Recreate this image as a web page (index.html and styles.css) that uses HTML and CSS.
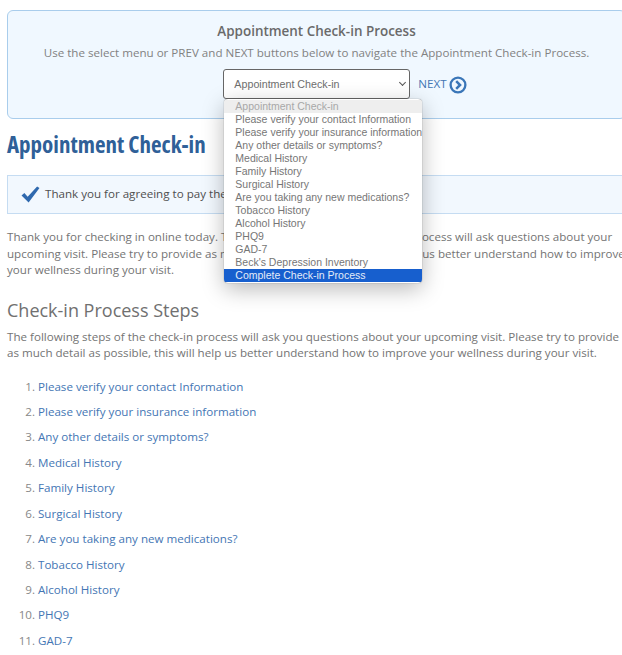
FILE: index.html
```html
<!DOCTYPE html>
<html lang="en">
<head>
    <meta charset="UTF-8">
    <meta name="viewport" content="width=device-width, initial-scale=1.0">
    <title>Appointment Check-in</title>
    <link rel="stylesheet" href="styles.css">
</head>
<body>
    <div class="page">
        <div class="nav-box">
            <h3>Appointment Check-in Process</h3>
            <p>Use the select menu or PREV and NEXT buttons below to navigate the Appointment Check-in Process.</p>
            <div class="nav-row">
                <div class="nav-spacer"></div>
                <div class="select-wrap">
                    <select class="step-select">
                        <option>Appointment Check-in</option>
                    </select>
                    <ul class="dropdown">
                        <li class="disabled">Appointment Check-in</li>
                        <li>Please verify your contact Information</li>
                        <li>Please verify your insurance information</li>
                        <li>Any other details or symptoms?</li>
                        <li>Medical History</li>
                        <li>Family History</li>
                        <li>Surgical History</li>
                        <li>Are you taking any new medications?</li>
                        <li>Tobacco History</li>
                        <li>Alcohol History</li>
                        <li>PHQ9</li>
                        <li>GAD-7</li>
                        <li>Beck's Depression Inventory</li>
                        <li class="selected">Complete Check-in Process</li>
                    </ul>
                </div>
                <a class="nav-link" href="#">NEXT
                    <svg class="next-icon" viewBox="0 0 20 20" width="18" height="18">
                        <circle cx="10" cy="10" r="8.2" fill="none" stroke="#3a76b8" stroke-width="2.6"/>
                        <path d="M8 5.6 L12.3 10 L8 14.4" fill="none" stroke="#3a76b8" stroke-width="2.8"/>
                    </svg>
                </a>
            </div>
        </div>

        <h1>Appointment Check-in</h1>

        <div class="alert">
            <svg class="check" viewBox="0 0 20 18" width="19" height="17">
                <path d="M0.5 10 L3.5 7.5 L7 11.5 L17 0.5 L19.5 2 L8 17.5 Z" fill="#2f69ae"/>
            </svg>
            <span>Thank you for agreeing to pay the co-pay for your visit.</span>
        </div>

        <p class="intro">Thank you for checking in online today. The following steps of the check-in process will ask questions about your upcoming visit. Please try to provide as much detail as possible, this will help us better understand how to improve your wellness during your visit.</p>

        <h2>Check-in Process Steps</h2>
        <p class="steps-intro">The following steps of the check-in process will ask you questions about your upcoming visit. Please try to provide as much detail as possible, this will help us better understand how to improve your wellness during your visit.</p>

        <ol class="steps">
            <li><a href="#">Please verify your contact Information</a></li>
            <li><a href="#">Please verify your insurance information</a></li>
            <li><a href="#">Any other details or symptoms?</a></li>
            <li><a href="#">Medical History</a></li>
            <li><a href="#">Family History</a></li>
            <li><a href="#">Surgical History</a></li>
            <li><a href="#">Are you taking any new medications?</a></li>
            <li><a href="#">Tobacco History</a></li>
            <li><a href="#">Alcohol History</a></li>
            <li><a href="#">PHQ9</a></li>
            <li><a href="#">GAD-7</a></li>
        </ol>
    </div>
</body>
</html>
```

FILE: styles.css
```css
html, body {
    margin: 0;
    height: 655px;
    overflow: hidden;
    background: #fff;
}
body {
    font-family: "Open Sans", sans-serif;
    font-size: 11.6px;
    line-height: 16.5px;
    color: #747474;
}
a {
    color: #4476b4;
    text-decoration: none;
}
.page {
    width: 619px;
    margin: 10px 0 0 7px;
}
.nav-box {
    box-sizing: border-box;
    height: 109px;
    padding-top: 10px;
    background: #f0f8ff;
    border: 1px solid #a9cdec;
    border-radius: 6px;
    text-align: center;
}
.nav-box h3 {
    margin: 0;
    font-size: 13.45px;
    line-height: 20px;
    font-weight: 600;
    color: #6a6a6a;
}
.nav-box p {
    margin: 4px 0 7px;
    color: #828282;
}
.nav-row {
    display: flex;
    justify-content: center;
    align-items: center;
    gap: 8px;
}
.nav-link {
    display: flex;
    align-items: center;
    gap: 2px;
    margin-top: 2px;
    font-size: 11.6px;
}
.nav-spacer {
    width: 49px;
}
.select-wrap {
    position: relative;
}
.select-wrap::after {
    content: "";
    position: absolute;
    top: 11px;
    right: 5px;
    width: 4px;
    height: 4px;
    border-right: 1px solid #555;
    border-bottom: 1px solid #555;
    transform: rotate(45deg);
}
.step-select {
    display: block;
    box-sizing: border-box;
    width: 187px;
    height: 30px;
    padding-left: 10px;
    appearance: none;
    background: #fff;
    border: 1px solid #666;
    border-radius: 3px;
    font-family: "Liberation Sans", sans-serif;
    font-size: 10.7px;
    color: #6e6e6e;
}
.dropdown {
    position: absolute;
    top: 30px;
    left: 1px;
    width: 198px;
    height: 184px;
    margin: 0;
    padding: 0;
    list-style: none;
    background: #fff;
    border-radius: 4px;
    box-shadow: 0 0 1px #555, 0 6px 22px rgba(0, 0, 0, 0.28);
    overflow: hidden;
    text-align: left;
    font-family: "Liberation Sans", sans-serif;
    font-size: 10.5px;
    line-height: 13.05px;
    color: #767676;
    white-space: nowrap;
}
.dropdown li {
    padding-left: 11px;
}
.dropdown li:first-child {
    margin-top: 1px;
}
.dropdown .disabled {
    background: #eeeeee;
    color: #a8a8a8;
}
.dropdown .selected {
    background: #175fce;
    color: #e4ecf8;
}
h1 {
    margin: 11px 0 17px;
    font-size: 23px;
    line-height: 28px;
    font-weight: 700;
    font-stretch: condensed;
    color: #2f6098;
}
.alert {
    display: flex;
    align-items: center;
    gap: 5px;
    box-sizing: border-box;
    height: 39px;
    padding-left: 13px;
    background: #f2f8fe;
    border: 1px solid #c5dcf2;
    color: #4f4f4f;
    white-space: nowrap;
    overflow: hidden;
}
.intro {
    margin: 15px 0 0;
}
h2 {
    margin: 19px 0 0;
    font-size: 18px;
    line-height: 24px;
    font-weight: 400;
    color: #707070;
}
.steps-intro {
    margin: 7px 0 0;
}
.steps {
    margin: 17px 0 0;
    padding-left: 31px;
}
.steps li {
    height: 25.45px;
    line-height: 16.5px;
    color: #888;
}
```
